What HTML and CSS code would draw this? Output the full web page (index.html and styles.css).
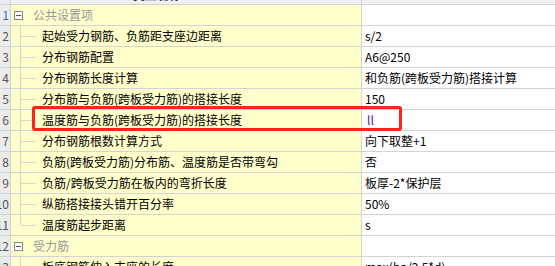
FILE: index.html
```html
<!DOCTYPE html>
<html lang="zh">
<head>
  <meta charset="UTF-8" />
  <title>计算设置</title>
  <link rel="stylesheet" href="styles.css">
</head>
<body>
  <div class="grid">
    <div class="head">
      <div class="num"></div>
      <div class="name"><span class="head-text">类型名称</span></div>
      <div class="val"></div>
    </div>

    <div class="row group">
      <div class="num sel"><span>1</span></div>
      <div class="name"><span class="fold"></span>公共设置项</div>
      <div class="val blank"></div>
    </div>
    <div class="row">
      <div class="num"><span>2</span></div>
      <div class="name"><span class="vline"></span><span class="hline"></span>起始受力钢筋、负筋距支座边距离</div>
      <div class="val">s/2</div>
    </div>
    <div class="row">
      <div class="num"><span>3</span></div>
      <div class="name"><span class="vline"></span><span class="hline"></span>分布钢筋配置</div>
      <div class="val">A6@250</div>
    </div>
    <div class="row">
      <div class="num"><span>4</span></div>
      <div class="name"><span class="vline"></span><span class="hline"></span>分布钢筋长度计算</div>
      <div class="val">和负筋(跨板受力筋)搭接计算</div>
    </div>
    <div class="row">
      <div class="num"><span>5</span></div>
      <div class="name"><span class="vline"></span><span class="hline"></span>分布筋与负筋(跨板受力筋)的搭接长度</div>
      <div class="val">150</div>
    </div>
    <div class="row">
      <div class="num"><span>6</span></div>
      <div class="name"><span class="vline"></span><span class="hline"></span>温度筋与负筋(跨板受力筋)的搭接长度</div>
      <div class="val edit">ll</div>
    </div>
    <div class="row">
      <div class="num"><span>7</span></div>
      <div class="name"><span class="vline"></span><span class="hline"></span>分布钢筋根数计算方式</div>
      <div class="val">向下取整+1</div>
    </div>
    <div class="row">
      <div class="num"><span>8</span></div>
      <div class="name"><span class="vline"></span><span class="hline"></span>负筋(跨板受力筋)分布筋、温度筋是否带弯勾</div>
      <div class="val">否</div>
    </div>
    <div class="row">
      <div class="num"><span>9</span></div>
      <div class="name"><span class="vline"></span><span class="hline"></span>负筋/跨板受力筋在板内的弯折长度</div>
      <div class="val">板厚-2*保护层</div>
    </div>
    <div class="row">
      <div class="num"><span>10</span></div>
      <div class="name"><span class="vline"></span><span class="hline"></span>纵筋搭接接头错开百分率</div>
      <div class="val">50%</div>
    </div>
    <div class="row">
      <div class="num"><span>11</span></div>
      <div class="name"><span class="vline last"></span><span class="hline"></span>温度筋起步距离</div>
      <div class="val">s</div>
    </div>
    <div class="row group">
      <div class="num"><span>12</span></div>
      <div class="name"><span class="fold"></span>受力筋</div>
      <div class="val blank"></div>
    </div>
    <div class="row">
      <div class="num"><span>13</span></div>
      <div class="name"><span class="vline"></span><span class="hline"></span>板底钢筋伸入支座的长度</div>
      <div class="val">max(ha/2,5*d)</div>
    </div>

    <div class="mark"></div>
  </div>
</body>
</html>
```

FILE: styles.css
```css
body {
  margin: 0;
  background: #fff;
  font-family: "Microsoft YaHei", "Noto Sans CJK SC", sans-serif;
  font-size: 12px;
  color: #000;
  overflow: hidden;
}
.grid {
  position: relative;
  width: 555px;
}
.head, .row {
  display: flex;
  border-bottom: 1px solid #d3d3d3;
}
.head {
  height: 4px;
  overflow: hidden;
  background: #f0f0f0;
}
.head-text {
  display: block;
  margin-top: -13px;
  padding-left: 122px;
  line-height: 16px;
  font-weight: bold;
  color: #333;
}
.row {
  height: 20px;
  line-height: 20px;
}
.num {
  width: 10px;
  flex: none;
  display: flex;
  justify-content: flex-end;
  overflow: hidden;
  background: #ececec;
  border-right: 1px solid #d3d3d3;
  color: #555;
}
.num span {
  padding-right: 1px;
  white-space: nowrap;
}
.num.sel {
  color: #2a6fd6;
}
.name {
  width: 350px;
  flex: none;
  display: flex;
  align-items: center;
  background: #ffffcc;
  border-right: 1px solid #d3d3d3;
  white-space: nowrap;
  overflow: hidden;
}
.head .name {
  display: block;
  background: #f0f0f0;
}
.val {
  flex: 1;
  padding-left: 3px;
  white-space: nowrap;
  overflow: hidden;
}
.val.blank {
  background: #fff;
}
.val.edit {
  color: #5a2383;
  padding-left: 5px;
}
.group .name {
  color: #999;
}
.fold {
  width: 7px;
  height: 7px;
  margin: 0 10px 0 3px;
  border: 1px solid #888;
  background: #fff;
  display: flex;
  align-items: center;
  justify-content: center;
}
.fold::after {
  content: "";
  width: 5px;
  height: 1px;
  background: #555;
}
.vline {
  width: 1px;
  align-self: stretch;
  margin-left: 9px;
  background: #d6d6d6;
}
.vline.last {
  align-self: flex-start;
  height: 10px;
}
.hline {
  width: 15px;
  height: 1px;
  margin-right: 6px;
  background: #d6d6d6;
}
.mark {
  position: absolute;
  left: 32px;
  top: 106px;
  width: 364px;
  height: 19px;
  border: 3px solid #ff2418;
  border-radius: 3px;
}
```
